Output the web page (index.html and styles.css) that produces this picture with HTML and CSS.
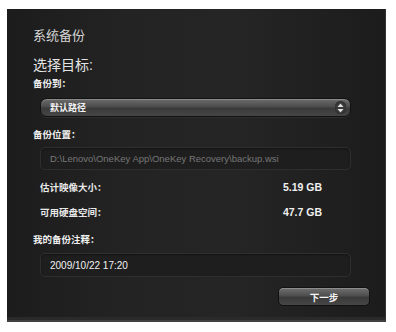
FILE: index.html
```html
<!DOCTYPE html>
<html lang="zh-CN">
<head>
<meta charset="utf-8">
<link rel="stylesheet" href="styles.css">
</head>
<body>
<div class="panel">
  <div class="title">系统备份</div>
  <div class="heading">选择目标:</div>
  <div class="label first">备份到：</div>
  <div class="select">
    <span>默认路径</span>
    <span class="spin"><svg width="7" height="10" viewBox="0 0 7 10"><path d="M3.5 0.5 L6.5 4 L0.5 4 Z M3.5 9.5 L6.5 6 L0.5 6 Z" fill="#e0e0e0"/></svg></span>
  </div>
  <div class="label loc">备份位置：</div>
  <div class="field disabled">D:\Lenovo\OneKey App\OneKey Recovery\backup.wsi</div>
  <div class="info size"><span>估计映像大小：</span><span class="val">5.19 GB</span></div>
  <div class="info free"><span>可用硬盘空间：</span><span class="val">47.7 GB</span></div>
  <div class="label note">我的备份注释：</div>
  <div class="field comment">2009/10/22 17:20</div>
  <div class="actions"><div class="btn">下一步</div></div>
</div>
</body>
</html>
```
FILE: styles.css
```css
html, body { margin: 0; padding: 0; background: #fff; }
body {
  width: 396px; height: 332px;
  font-family: "Liberation Sans", "Noto Sans CJK SC", sans-serif;
  padding: 9px 0 0 7px;
  box-sizing: border-box;
}
.panel {
  width: 379px; height: 313px;
  box-sizing: border-box;
  background: linear-gradient(90deg, #1c1c1c 0%, #232323 30%, #252525 60%, #1c1c1c 100%);
  border-right: 1px solid #333;
  border-bottom: 2px solid #404040;
  box-shadow: inset 0 -3px 0 #2a2a2a;
  padding: 18px 34px 0 26px;
  color: #e6e6e6;
}
.title { font-size: 13px; line-height: 18px; color: #d4d4d4; }
.heading { font-size: 14px; line-height: 20px; margin-top: 10px; color: #e4e4e4; }
.label { font-size: 9.5px; line-height: 12px; font-weight: bold; color: #f0f0f0; }
.label.first { margin-top: 3px; }
.select {
  margin: 8px 0 0 7px; height: 19px;
  border-radius: 7px;
  border: 1px solid #111;
  background: linear-gradient(180deg, #6c6c6c 0%, #4c4c4c 45%, #3a3a3a 55%, #464646 100%);
  box-shadow: inset 0 1px 0 #8a8a8a, 0 1px 0 #2e2e2e;
  display: flex; align-items: center; justify-content: space-between;
  padding: 0 4px 0 9px; box-sizing: border-box;
  font-size: 9px; font-weight: bold; color: #f2f2f2;
}
.spin {
  width: 11px; height: 13px; border-radius: 6px;
  background: #3a3a3a; box-shadow: inset 0 0 2px #222;
  display: flex; align-items: center; justify-content: center;
}
.label.loc { margin-top: 12px; }
.field {
  margin: 6px 0 0 7px; height: 23px;
  border-radius: 5px;
  border: 1px solid #2f2f2f;
  background: #1e1e1e;
  box-shadow: inset 0 1px 2px #141414;
  box-sizing: border-box;
  padding: 0 9px;
  display: flex; align-items: center;
  font-size: 9.5px;
}
.disabled { color: #777; }
.info {
  display: flex; align-items: center; font-size: 9.5px; font-weight: bold; color: #e8e8e8;
  padding-left: 7px; height: 12px;
}
.info.size { margin-top: 11px; }
.info.free { margin-top: 13px; }
.val { margin-left: auto; margin-right: 29px; font-size: 10.5px; font-weight: bold; color: #f0f0f0; }
.label.note { margin-top: 16px; }
.field.comment { margin-top: 7px; height: 24px; color: #f2f2f2; font-size: 10px; }
.actions { display: flex; justify-content: flex-end; margin-top: 10px; margin-right: -19px; }
.btn {
  width: 92px; height: 19px; box-sizing: border-box;
  border-radius: 5px;
  border: 1px solid #111;
  background: linear-gradient(180deg, #707070 0%, #4e4e4e 45%, #3a3a3a 55%, #464646 100%);
  box-shadow: inset 0 1px 0 #8c8c8c;
  display: flex; align-items: center; justify-content: center;
  font-size: 9.5px; font-weight: bold; color: #f4f4f4;
}
```
